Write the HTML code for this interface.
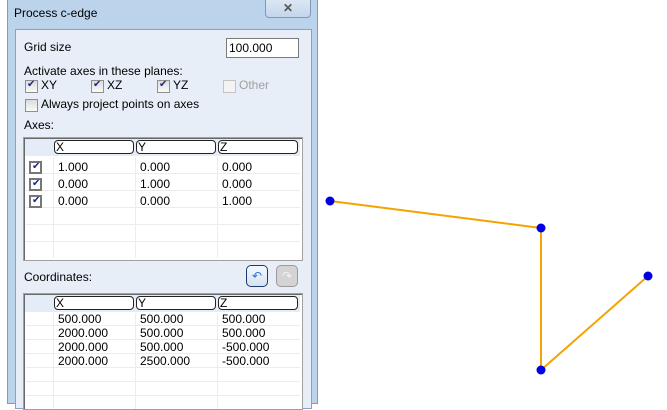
<!DOCTYPE html><html><head><style>
body{margin:0;width:667px;height:404px;background:#fff;position:relative;overflow:hidden;font-family:"Liberation Sans",sans-serif;font-size:12px;color:#000}
.a{position:absolute}
.cb{position:absolute;width:11px;height:11px;border:1px solid #8f8f8f;background:linear-gradient(#dcdcdc,#fafafa)}
.cb.c::after{content:"✔";position:absolute;left:1px;top:-2px;font-size:10px;color:#1b2a8a}
.tbl{position:absolute;background:#fff;border:1px solid #a0a0a0;box-shadow:inset 1px 1px 0 #696969}
.hd{position:absolute;top:2px;height:14px;border:1px solid #222;border-radius:4px;background:#fff;font-size:12px;line-height:13px;padding-left:1px;box-sizing:border-box}
.hl{position:absolute;left:2px;right:2px;height:1px;background:#ececec}
.vl{position:absolute;width:1px;background:#ececec}
.t{position:absolute;font-size:12px}
</style></head><body>
<div class="a" style="left:7px;top:0;width:311px;height:404px;background:#bcd3ec;border:1px solid #7d9cc0;border-top:none;box-sizing:border-box"></div>
<div class="a" style="left:14px;top:6px;font-size:12px">Process c-edge</div>
<div class="a" style="left:265px;top:0;width:46px;height:18px;border:1px solid #7f99b8;border-top:none;border-radius:0 0 4px 4px;background:linear-gradient(#dbe7f4,#c3d6ec);box-sizing:border-box;text-align:center;font-weight:bold;color:#555;font-size:12px;line-height:16px">✕</div>
<div class="a" style="left:15px;top:29px;width:297px;height:380px;background:#e7eef7;border:1px solid #8aa2bf;box-sizing:border-box"></div>
<div class="t" style="left:24px;top:40px">Grid size</div>
<div class="a" style="left:226px;top:38px;width:73px;height:20px;background:#fff;border:1px solid #7a7a7a;box-sizing:border-box;font-size:12px;padding:2px 0 0 2px">100.000</div>
<div class="t" style="left:24px;top:64px">Activate axes in these planes:</div>
<div class="cb c" style="left:25px;top:80px"></div><div class="t" style="left:41px;top:78px">XY</div>
<div class="cb c" style="left:91px;top:80px"></div><div class="t" style="left:107px;top:78px">XZ</div>
<div class="cb c" style="left:157px;top:80px"></div><div class="t" style="left:173px;top:78px">YZ</div>
<div class="cb" style="left:223px;top:80px;border-color:#c4c4c4;background:#f3f3f3"></div><div class="t" style="left:239px;top:78px;color:#a0a0a0">Other</div>
<div class="cb" style="left:25px;top:99px"></div><div class="t" style="left:41px;top:97px">Always project points on axes</div>
<div class="t" style="left:24px;top:118px">Axes:</div>
<div class="tbl" style="left:23px;top:137px;width:278px;height:122px">
 <div class="a" style="left:1px;top:1px;width:275px;height:17px;background:#e4edf7"></div>
 <div class="hd" style="left:30px;width:80px">X</div><div class="hd" style="left:112px;width:80px">Y</div><div class="hd" style="left:194px;width:80px">Z</div>
 <div class="hl" style="top:35px"></div><div class="hl" style="top:52px"></div><div class="hl" style="top:69px"></div><div class="hl" style="top:86px"></div><div class="hl" style="top:103px"></div>
 <div class="vl" style="left:29px;top:19px;height:101px"></div><div class="vl" style="left:111px;top:19px;height:101px"></div><div class="vl" style="left:193px;top:19px;height:101px"></div>
 <div class="cb c" style="left:5px;top:23px;border:2px solid #777;width:9px;height:9px;background:#fff"></div>
 <div class="cb c" style="left:5px;top:40px;border:2px solid #777;width:9px;height:9px;background:#fff"></div>
 <div class="cb c" style="left:5px;top:57px;border:2px solid #777;width:9px;height:9px;background:#fff"></div>
 <div class="t" style="left:34px;top:22px">1.000</div><div class="t" style="left:116px;top:22px">0.000</div><div class="t" style="left:198px;top:22px">0.000</div>
 <div class="t" style="left:34px;top:39px">0.000</div><div class="t" style="left:116px;top:39px">1.000</div><div class="t" style="left:198px;top:39px">0.000</div>
 <div class="t" style="left:34px;top:56px">0.000</div><div class="t" style="left:116px;top:56px">0.000</div><div class="t" style="left:198px;top:56px">1.000</div>
</div>
<div class="t" style="left:24px;top:270px">Coordinates:</div>
<div class="a" style="left:246px;top:265px;width:22px;height:22px;border:1px solid #1c3a6e;border-radius:5px;background:linear-gradient(#f4f8fd,#d5e2f1);box-sizing:border-box;color:#2f6fd6;text-align:center;font-size:12px;line-height:20px">↶</div>
<div class="a" style="left:276px;top:265px;width:22px;height:22px;border:1px solid #9a9a9a;border-radius:5px;background:#d4d4d4;box-sizing:border-box;color:#f4f4f4;text-align:center;font-size:12px;line-height:20px">↷</div>
<div class="tbl" style="left:23px;top:293px;width:278px;height:115px">
 <div class="a" style="left:1px;top:1px;width:275px;height:17px;background:#e4edf7"></div>
 <div class="hd" style="left:30px;width:80px">X</div><div class="hd" style="left:112px;width:80px">Y</div><div class="hd" style="left:194px;width:80px">Z</div>
 <div class="hl" style="top:31px"></div><div class="hl" style="top:45px"></div><div class="hl" style="top:59px"></div><div class="hl" style="top:73px"></div><div class="hl" style="top:87px"></div><div class="hl" style="top:101px"></div>
 <div class="vl" style="left:29px;top:19px;height:96px"></div><div class="vl" style="left:111px;top:19px;height:96px"></div><div class="vl" style="left:193px;top:19px;height:96px"></div>
 <div class="t" style="left:34px;top:18px">500.000</div><div class="t" style="left:116px;top:18px">500.000</div><div class="t" style="left:198px;top:18px">500.000</div>
 <div class="t" style="left:34px;top:32px">2000.000</div><div class="t" style="left:116px;top:32px">500.000</div><div class="t" style="left:198px;top:32px">500.000</div>
 <div class="t" style="left:34px;top:46px">2000.000</div><div class="t" style="left:116px;top:46px">500.000</div><div class="t" style="left:198px;top:46px">-500.000</div>
 <div class="t" style="left:34px;top:60px">2000.000</div><div class="t" style="left:116px;top:60px">2500.000</div><div class="t" style="left:198px;top:60px">-500.000</div>
</div>
<svg class="a" style="left:0;top:0" width="667" height="404"><polyline points="330,201 541,228 541,370 648,276" fill="none" stroke="#f5a300" stroke-width="2"/>
<g fill="#0000e0"><circle cx="330" cy="201" r="4.5"/><circle cx="541" cy="228" r="4.5"/><circle cx="541" cy="370" r="4.5"/><circle cx="648" cy="276" r="4.5"/></g></svg>
</body></html>
